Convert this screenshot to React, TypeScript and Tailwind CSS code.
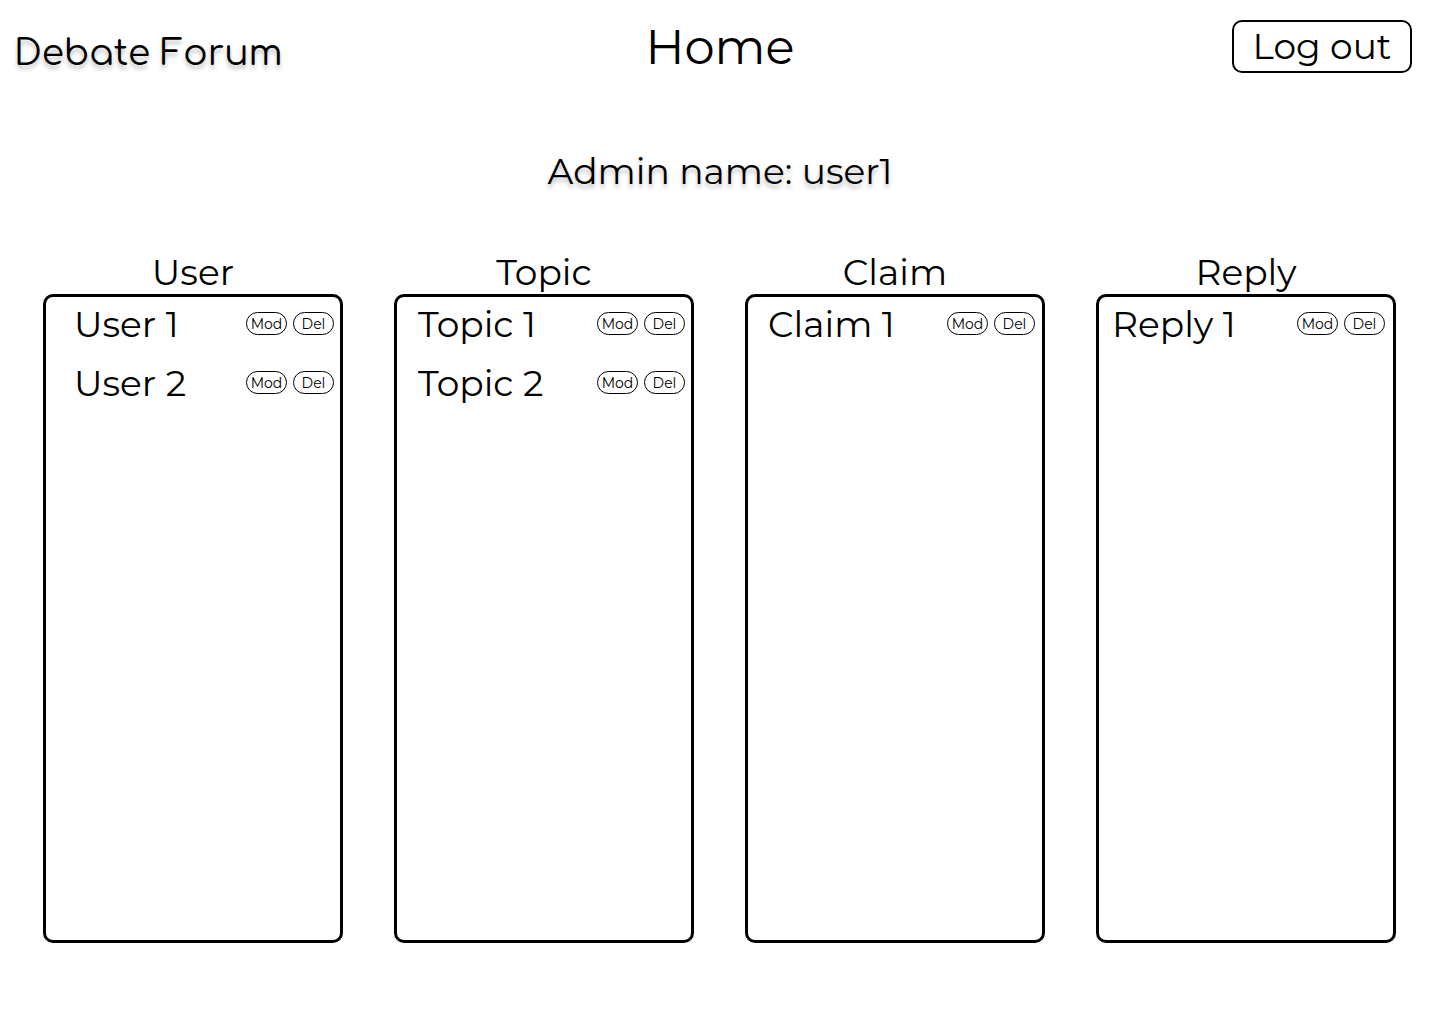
type Column = {
  title: string;
  items: string[];
  rowPadding: string;
};

const columns: Column[] = [
  { title: 'User', items: ['User 1', 'User 2'], rowPadding: 'pl-7 pr-1.5' },
  { title: 'Topic', items: ['Topic 1', 'Topic 2'], rowPadding: 'pl-[21px] pr-1.5' },
  { title: 'Claim', items: ['Claim 1'], rowPadding: 'pl-5 pr-[7px]' },
  { title: 'Reply', items: ['Reply 1'], rowPadding: 'pl-[13px] pr-2' },
];

function PillButton({ label, item }: { label: string; item: string }) {
  return (
    <button
      type="button"
      aria-label={`${label} ${item}`}
      className="flex h-[23px] w-[41px] cursor-pointer items-center justify-center rounded-full border border-black text-[14px] leading-none"
    >
      {label}
    </button>
  );
}

function Panel({ title, items, rowPadding }: Column) {
  return (
    <section className="flex min-w-0 flex-col">
      <h2 className="text-center text-[36px] leading-[44px]">{title}</h2>
      <ul className="flex grow flex-col gap-1.5 rounded-[10px] border-3 border-black">
        {items.map((item) => (
          <li key={item} className={`flex h-[53px] items-center justify-between ${rowPadding}`}>
            <span className="text-[36px] leading-[44px]">{item}</span>
            <span className="flex gap-1.5">
              <PillButton label="Mod" item={item} />
              <PillButton label="Del" item={item} />
            </span>
          </li>
        ))}
      </ul>
    </section>
  );
}

export default function App() {
  return (
    <div className="flex min-h-screen flex-col bg-white font-['Montserrat',sans-serif] text-black antialiased">
      <header className="grid grid-cols-[1fr_auto_1fr] items-start px-3.5 pt-5">
        <a
          href="#"
          className="justify-self-start pt-[11px] font-['Comfortaa',sans-serif] text-[36px] leading-[44px] text-shadow-[0_4px_4px_rgb(0_0_0/0.25)]"
        >
          Debate Forum
        </a>
        <h1 className="text-[48px] leading-[55px]">Home</h1>
        <button
          type="button"
          className="mr-3.5 flex h-[53px] w-[180px] cursor-pointer items-center justify-center justify-self-end rounded-[10px] border-2 border-black pb-0.5 text-[36px] leading-none"
        >
          Log out
        </button>
      </header>
      <p className="mt-[74px] text-center text-[36px] leading-[44px] text-shadow-[0_4px_4px_rgb(0_0_0/0.25)]">
        Admin name: user1
      </p>
      <main className="mt-[57px] grid grow grid-cols-4 gap-[51px] pr-11 pb-[81px] pl-[43px]">
        {columns.map((column) => (
          <Panel key={column.title} {...column} />
        ))}
      </main>
    </div>
  );
}
